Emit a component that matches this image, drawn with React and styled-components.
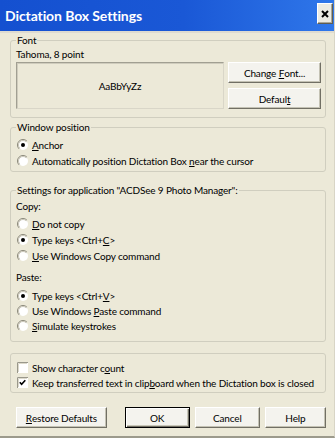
import React from 'react';
import styled, { createGlobalStyle } from 'styled-components';

const Global = createGlobalStyle`
  html, body { margin: 0; padding: 0; background: #ece9d8; }
  body { font-family: Lato, "Liberation Sans", sans-serif; font-size: 10px; letter-spacing: -0.15px; color: #000; }
`;

const Window = styled.div`
  width: 335px;
  height: 438px;
  box-sizing: border-box;
  background: #ece9d8;
  display: flex;
  flex-direction: column;
  overflow: hidden;
  border-right: 1px solid #d8d5c6;
  border-bottom: 2px solid #9c9a8c;
`;

const TitleBar = styled.div`
  flex: none;
  height: 33px;
  box-sizing: border-box;
  display: flex;
  align-items: flex-start;
  justify-content: space-between;
  padding: 0 1px 0 5px;
  background: linear-gradient(90deg, #1450d0 0%, #1a58d6 55%, #2f77ea 100%);
  border-bottom: 2px solid #dedbd0;
`;

const Title = styled.div`
  color: #fff;
  font-family: Lato, "Liberation Sans", sans-serif;
  font-weight: 700;
  font-size: 14px;
  line-height: 31px;
  letter-spacing: -0.1px;
`;

const CloseButton = styled.div`
  margin-top: 3px;
  width: 16px;
  height: 21px;
  box-sizing: border-box;
  background: #ecebe3;
  border: 1px solid;
  border-color: #ffffff #5f5d52 #5f5d52 #ffffff;
  box-shadow: inset -1px -1px 0 #a9a799;
  display: flex;
  align-items: center;
  justify-content: center;
`;

const Body = styled.div`
  flex: 1;
  display: flex;
  flex-direction: column;
  padding: 1px 8px 0 10px;
`;

const Group = styled.fieldset`
  margin: ${p => p.$mt || 0}px 0 0;
  padding: ${p => p.$pad};
  border: 1px solid #d0cebf;
  border-radius: 3px;
  min-width: 0;
  display: flex;
  flex-direction: column;
`;

const Legend = styled.legend`
  padding: 0 1px;
  line-height: 13px;
`;

const Caption = styled.div`
  line-height: 14px;
  height: ${p => p.$h || 14}px;
  margin-top: ${p => p.$mt || 0}px;
  display: flex;
  align-items: center;
`;

const FontRow = styled.div`
  display: flex;
  justify-content: space-between;
  margin-top: 1px;
`;

const Preview = styled.div`
  width: 208px;
  height: 47px;
  box-sizing: border-box;
  border: 1px solid;
  border-color: #a19f92 #d9d6c8 #d9d6c8 #a19f92;
  box-shadow: inset 1px 1px 0 #cfccbd;
  display: flex;
  align-items: center;
  justify-content: center;
`;

const ButtonStack = styled.div`
  display: flex;
  flex-direction: column;
  gap: 5px;
`;

const Button = styled.div`
  width: ${p => p.$w}px;
  height: 21px;
  box-sizing: border-box;
  background: #f4f3ee;
  border: 1px solid;
  border-color: ${p => (p.$default ? '#000 #000 #000 #000' : '#ffffff #716f64 #716f64 #ffffff')};
  box-shadow: ${p =>
    p.$default
      ? 'inset 1px 1px 0 #fff, inset -1px -1px 0 #716f64, inset -2px -2px 0 #c9c7b9'
      : 'inset -1px -1px 0 #c4c2b4'};
  display: flex;
  align-items: center;
  justify-content: center;
  line-height: 1;
  white-space: nowrap;
`;

const U = styled.span`
  text-decoration: underline;
  text-underline-offset: 1px;
`;

const Row = styled.div`
  display: flex;
  align-items: center;
  height: ${p => p.$h || 16}px;
  padding-left: 1px;
  gap: ${p => p.$gap || 3}px;
  white-space: nowrap;
`;

const Glyph = styled.svg`
  flex: none;
  display: block;
`;

const ButtonBar = styled.div`
  display: flex;
  gap: 5px;
  margin-top: 14px;
  padding-left: 6px;
`;

const Spacer = styled.div`
  width: 8px;
`;

function Radio({ checked }) {
  return (
    <Glyph width="12" height="12" viewBox="0 0 12 12">
      <circle cx="6" cy="6" r="5" fill="#ffffff" />
      <path d="M9.9 2.1 A5.5 5.5 0 0 0 2.1 9.9" fill="none" stroke="#8a887b" strokeWidth="1" />
      <path d="M9.2 2.8 A4.5 4.5 0 0 0 2.8 9.2" fill="none" stroke="#c9c6b7" strokeWidth="1" />
      {checked && <circle cx="6" cy="6" r="2" fill="#000" />}
    </Glyph>
  );
}

function Check({ checked }) {
  return (
    <Glyph width="11" height="11" viewBox="0 0 11 11">
      <rect x="0" y="0" width="11" height="11" fill="#ffffff" />
      <path d="M0.5 11 V0.5 H11" fill="none" stroke="#9a988b" strokeWidth="1" />
      <path d="M1.5 10 V1.5 H10" fill="none" stroke="#dcd9cb" strokeWidth="1" />
      {checked && (
        <path d="M2.8 5.3 L4.6 7.3 L8.3 3.2" fill="none" stroke="#000" strokeWidth="1.6" />
      )}
    </Glyph>
  );
}

function RadioRow({ checked, h, children }) {
  return (
    <Row $h={h}>
      <Radio checked={checked} />
      <span>{children}</span>
    </Row>
  );
}

function CheckRow({ checked, h, children }) {
  return (
    <Row $h={h} $gap={4}>
      <Check checked={checked} />
      <span>{children}</span>
    </Row>
  );
}

export default function App() {
  return (
    <>
      <Global />
      <Window>
        <TitleBar>
          <Title>Dictation Box Settings</Title>
          <CloseButton>
            <svg width="8" height="8" viewBox="0 0 8 8">
              <path d="M1 1 L7 7 M7 1 L1 7" stroke="#000" strokeWidth="2" />
            </svg>
          </CloseButton>
        </TitleBar>
        <Body>
          <Group $pad="0 4px 8px 5px">
            <Legend>Font</Legend>
            <Caption>Tahoma, 8 point</Caption>
            <FontRow>
              <Preview>AaBbYyZz</Preview>
              <ButtonStack>
                <Button $w={93}>
                  Change&nbsp;<U>F</U>ont...
                </Button>
                <Button $w={93}>
                  Defaul<U>t</U>
                </Button>
              </ButtonStack>
            </FontRow>
          </Group>

          <Group $mt={3} $pad="3px 4px 2px 5px">
            <Legend>Window position</Legend>
            <RadioRow checked>
              <U>A</U>nchor
            </RadioRow>
            <RadioRow>
              Automatically position Dictation Box <U>n</U>ear the cursor
            </RadioRow>
          </Group>

          <Group $mt={12} $pad="2px 4px 8px 5px">
            <Legend>Settings for application "ACDSee 9 Photo Manager":</Legend>
            <Caption>Copy:</Caption>
            <Caption $h={3} />
            <RadioRow>
              <U>D</U>o not copy
            </RadioRow>
            <RadioRow checked>
              Type keys &lt;Ctrl+<U>C</U>&gt;
            </RadioRow>
            <RadioRow>
              <U>U</U>se Windows Copy command
            </RadioRow>
            <Caption $mt={6}>Paste:</Caption>
            <Caption $h={4} />
            <RadioRow checked h={15}>
              Type keys &lt;Ctrl+<U>V</U>&gt;
            </RadioRow>
            <RadioRow h={15}>
              Use Windows <U>P</U>aste command
            </RadioRow>
            <RadioRow h={15}>
              <U>S</U>imulate keystrokes
            </RadioRow>
          </Group>

          <Group $mt={11} $pad="6px 4px 2px 5px">
            <CheckRow h={15}>
              Show character c<U>o</U>unt
            </CheckRow>
            <CheckRow checked h={15}>
              Keep transferred text in clip<U>b</U>oard when the Dictation box is closed
            </CheckRow>
          </Group>

          <ButtonBar>
            <Button $w={92}>
              <U>R</U>estore Defaults
            </Button>
            <Spacer />
            <Button $w={66} $default>
              OK
            </Button>
            <Button $w={66}>Cancel</Button>
            <Button $w={62}>Help</Button>
          </ButtonBar>
        </Body>
      </Window>
    </>
  );
}
